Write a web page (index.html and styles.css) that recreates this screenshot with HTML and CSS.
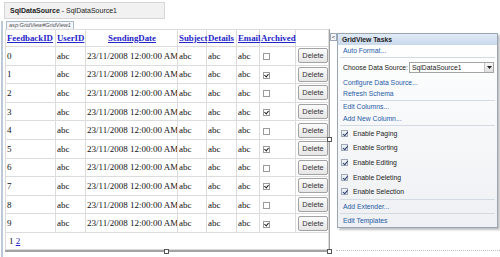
FILE: index.html
```html
<!DOCTYPE html>
<html lang="en">
    <head>
        <meta charset="UTF-8" />
        <meta name="viewport" content="width=device-width, initial-scale=1.0" />
        <title>GridView Designer</title>
        <link rel="stylesheet" href="styles.css">
    </head>
    <body>
        <div class="designer">
            <div class="datasource"><b>SqlDataSource</b> - SqlDataSource1</div>
            <div class="grid-area">
                <div class="grid-tag">asp:GridView#GridView1</div>
                <div class="grid-frame">
                    <table class="grid">
                        <colgroup>
                            <col style="width: 50px" />
                            <col style="width: 30px" />
                            <col style="width: 92px" />
                            <col style="width: 29px" />
                            <col style="width: 30px" />
                            <col style="width: 23px" />
                            <col style="width: 36px" />
                            <col style="width: 33px" />
                        </colgroup>
                        <thead>
                            <tr>
                                <th><a href="#">FeedbackID</a></th>
                                <th><a href="#">UserID</a></th>
                                <th class="center"><a href="#">SendingDate</a></th>
                                <th><a href="#">Subject</a></th>
                                <th><a href="#">Details</a></th>
                                <th><a href="#">Email</a></th>
                                <th><a href="#">Archived</a></th>
                                <th></th>
                            </tr>
                        </thead>
                        <tbody>
                            <tr><td>0</td><td>abc</td><td>23/11/2008 12:00:00 AM</td><td>abc</td><td>abc</td><td>abc</td><td><span class="check"></span></td><td><button type="button" class="delete">Delete</button></td></tr>
                            <tr><td>1</td><td>abc</td><td>23/11/2008 12:00:00 AM</td><td>abc</td><td>abc</td><td>abc</td><td><span class="check on"></span></td><td><button type="button" class="delete">Delete</button></td></tr>
                            <tr><td>2</td><td>abc</td><td>23/11/2008 12:00:00 AM</td><td>abc</td><td>abc</td><td>abc</td><td><span class="check"></span></td><td><button type="button" class="delete">Delete</button></td></tr>
                            <tr><td>3</td><td>abc</td><td>23/11/2008 12:00:00 AM</td><td>abc</td><td>abc</td><td>abc</td><td><span class="check on"></span></td><td><button type="button" class="delete">Delete</button></td></tr>
                            <tr><td>4</td><td>abc</td><td>23/11/2008 12:00:00 AM</td><td>abc</td><td>abc</td><td>abc</td><td><span class="check"></span></td><td><button type="button" class="delete">Delete</button></td></tr>
                            <tr><td>5</td><td>abc</td><td>23/11/2008 12:00:00 AM</td><td>abc</td><td>abc</td><td>abc</td><td><span class="check on"></span></td><td><button type="button" class="delete">Delete</button></td></tr>
                            <tr><td>6</td><td>abc</td><td>23/11/2008 12:00:00 AM</td><td>abc</td><td>abc</td><td>abc</td><td><span class="check"></span></td><td><button type="button" class="delete">Delete</button></td></tr>
                            <tr><td>7</td><td>abc</td><td>23/11/2008 12:00:00 AM</td><td>abc</td><td>abc</td><td>abc</td><td><span class="check on"></span></td><td><button type="button" class="delete">Delete</button></td></tr>
                            <tr><td>8</td><td>abc</td><td>23/11/2008 12:00:00 AM</td><td>abc</td><td>abc</td><td>abc</td><td><span class="check"></span></td><td><button type="button" class="delete">Delete</button></td></tr>
                            <tr><td>9</td><td>abc</td><td>23/11/2008 12:00:00 AM</td><td>abc</td><td>abc</td><td>abc</td><td><span class="check on"></span></td><td><button type="button" class="delete">Delete</button></td></tr>
                        </tbody>
                        <tfoot>
                            <tr><td colspan="8" class="pager">1 <a href="#">2</a></td></tr>
                        </tfoot>
                    </table>
                    <span class="handle handle-right"></span>
                    <span class="handle handle-bottom"></span>
                    <span class="handle handle-corner"></span>
                    <span class="dotted"></span>
                </div>
            </div>
        </div>

        <div class="smart-btn">&lt;</div>

        <div class="tasks">
            <div class="tasks-title">GridView Tasks</div>
            <div class="group g-format">
                <a href="#" class="item h12">Auto Format...</a>
            </div>
            <div class="group g-source">
                <div class="choose">
                    <span>Choose Data Source:</span>
                    <span class="select">
                        <span class="select-value">SqlDataSource1</span>
                        <span class="select-arrow">
                            <svg width="5" height="3" viewBox="0 0 5 3"><path d="M0 0h5L2.5 3z" fill="#222"/></svg>
                        </span>
                    </span>
                </div>
                <a href="#" class="item h11">Configure Data Source...</a>
                <a href="#" class="item h12">Refresh Schema</a>
            </div>
            <div class="group g-columns">
                <a href="#" class="item h12">Edit Columns...</a>
                <a href="#" class="item h12">Add New Column...</a>
            </div>
            <div class="group checks">
                <div class="option"><span class="tick"></span>Enable Paging</div>
                <div class="option"><span class="tick"></span>Enable Sorting</div>
                <div class="option"><span class="tick"></span>Enable Editing</div>
                <div class="option"><span class="tick"></span>Enable Deleting</div>
                <div class="option"><span class="tick"></span>Enable Selection</div>
            </div>
            <div class="group g-extender">
                <a href="#" class="item h13">Add Extender...</a>
            </div>
            <div class="group last">
                <a href="#" class="item h13">Edit Templates</a>
            </div>
        </div>
    </body>
</html>
```

FILE: styles.css
```css
* {
    margin: 0;
    padding: 0;
    box-sizing: border-box;
}
body {
    background-color: #fff;
    width: 500px;
    height: 257px;
    overflow: hidden;
    position: relative;
    font-family: "Liberation Sans", Arial, sans-serif;
}
.designer {
    padding-top: 2px;
}
.datasource {
    margin-left: 4px;
    width: 161px;
    height: 17px;
    line-height: 15px;
    border: 1px solid #d6d6d6;
    background-color: #f1f1f1;
    font-size: 7px;
    color: #222;
    padding-left: 5px;
}
.datasource b {
    font-weight: bold;
}
.grid-area {
    margin-top: 2px;
    margin-left: 1px;
    border-left: 2px solid #bdc9d6;
    padding-left: 2px;
    height: 240px;
}
.grid-tag {
    display: block;
    width: fit-content;
    height: 8px;
    line-height: 7px;
    margin-left: 1px;
    padding: 0 2px;
    border: 1px solid #a9bccf;
    border-bottom: none;
    background-color: #f4f6f9;
    font-size: 5.6px;
    font-style: italic;
    color: #555;
}
.grid-frame {
    position: relative;
    width: 325px;
    border-right: 2px solid #a3a3a3;
    border-bottom: 2px solid #a3a3a3;
}
.grid {
    width: 323px;
    table-layout: fixed;
    border-collapse: collapse;
    border: 1px solid #8f8f8f;
    font-family: "Liberation Serif", "Times New Roman", serif;
    font-size: 9px;
    color: #111;
}
.grid th,
.grid td {
    border: 1px solid #dcdcdc;
    padding: 0 0 0 1px;
    text-align: left;
    vertical-align: middle;
    white-space: nowrap;
    overflow: hidden;
}
.grid thead tr {
    height: 17px;
}
.grid tbody tr {
    height: 18.6px;
}
.grid th {
    font-weight: bold;
    font-size: 8.8px;
    overflow: visible;
}
.grid td {
    font-weight: normal;
}
.grid th.center {
    text-align: center;
}
.grid a {
    color: #2424c8;
    text-decoration: underline;
}
.grid .pager {
    height: 17px;
    padding-left: 3px;
    border-top: 1px solid #dcdcdc;
}
.check {
    display: inline-block;
    width: 7px;
    height: 7px;
    margin-left: 2px;
    border: 1px solid #9a9a9a;
    background-color: #fff;
    vertical-align: middle;
    position: relative;
}
.check.on::after {
    content: "";
    position: absolute;
    left: 1px;
    top: 0;
    width: 2px;
    height: 3px;
    border-right: 1px solid #222;
    border-bottom: 1px solid #222;
    transform: rotate(40deg);
}
.delete {
    display: block;
    width: 30px;
    height: 15px;
    margin-left: 1px;
    border: 1px solid #a2a2a2;
    border-radius: 2px;
    background: linear-gradient(#fbfbfb, #e6e6e6);
    font-family: "Liberation Sans", Arial, sans-serif;
    font-size: 7.4px;
    color: #333;
    cursor: pointer;
}
.handle {
    position: absolute;
    width: 5px;
    height: 5px;
    border: 1px solid #555;
    background-color: #fff;
}
.handle-right {
    right: -4px;
    top: 108px;
}
.handle-bottom {
    left: 159px;
    bottom: -4px;
}
.handle-corner {
    right: -4px;
    bottom: -4px;
}
.dotted {
    position: absolute;
    left: 331px;
    bottom: -1px;
    width: 170px;
    border-top: 1px dotted #bdbdbd;
}
.smart-btn {
    position: absolute;
    left: 330px;
    top: 33px;
    width: 7px;
    height: 8px;
    border: 1px solid #9aa8b8;
    background-color: #f4f6f9;
    font-size: 6px;
    line-height: 6px;
    text-align: center;
    color: #333;
}
.tasks {
    position: absolute;
    left: 337px;
    top: 33px;
    width: 161px;
    height: 195px;
    border: 1px solid #9aa6b4;
    background: linear-gradient(#ffffff, #eef0f3);
    box-shadow: 2px 2px 2px rgba(0, 0, 0, 0.25);
    font-size: 6.8px;
    color: #222;
    display: flex;
    flex-direction: column;
}
.tasks-title {
    flex: none;
    height: 11px;
    line-height: 11px;
    padding-left: 4px;
    font-weight: bold;
    background: linear-gradient(#e2ebf6, #c8d8ec);
    color: #1b1b1b;
}
.group {
    flex: none;
    display: flex;
    flex-direction: column;
    margin: 0 2px;
    border-bottom: 1px solid #d3dae2;
}
.group.last {
    border-bottom: none;
}
.item {
    display: block;
    flex: none;
    padding-left: 3px;
    color: #1d5aa6;
    text-decoration: none;
}
.h11 {
    height: 11px;
    line-height: 11px;
}
.h12 {
    height: 12px;
    line-height: 12px;
}
.h13 {
    height: 13px;
    line-height: 13px;
}
.choose {
    flex: none;
    height: 19px;
    display: flex;
    align-items: center;
    justify-content: space-between;
    padding: 0 1px 0 3px;
    white-space: nowrap;
}
.select {
    width: 85px;
    height: 11px;
    border: 1px solid #a4a4a4;
    background-color: #fff;
    display: flex;
    align-items: center;
    justify-content: space-between;
    padding-left: 2px;
}
.select-arrow {
    width: 9px;
    height: 9px;
    background: linear-gradient(#f7f7f7, #dedede);
    border-left: 1px solid #c4c4c4;
    display: flex;
    align-items: center;
    justify-content: center;
}
.option {
    height: 14.6px;
    display: flex;
    align-items: center;
    gap: 5px;
    padding-left: 1px;
}
.tick {
    width: 7px;
    height: 7px;
    border: 1px solid #9eaab8;
    background: linear-gradient(#f2f4f7, #dfe4ea);
    position: relative;
}
.tick::after {
    content: "";
    position: absolute;
    left: 1.5px;
    top: 0;
    width: 2px;
    height: 3.5px;
    border-right: 1px solid #2d3e6e;
    border-bottom: 1px solid #2d3e6e;
    transform: rotate(40deg);
}
```
